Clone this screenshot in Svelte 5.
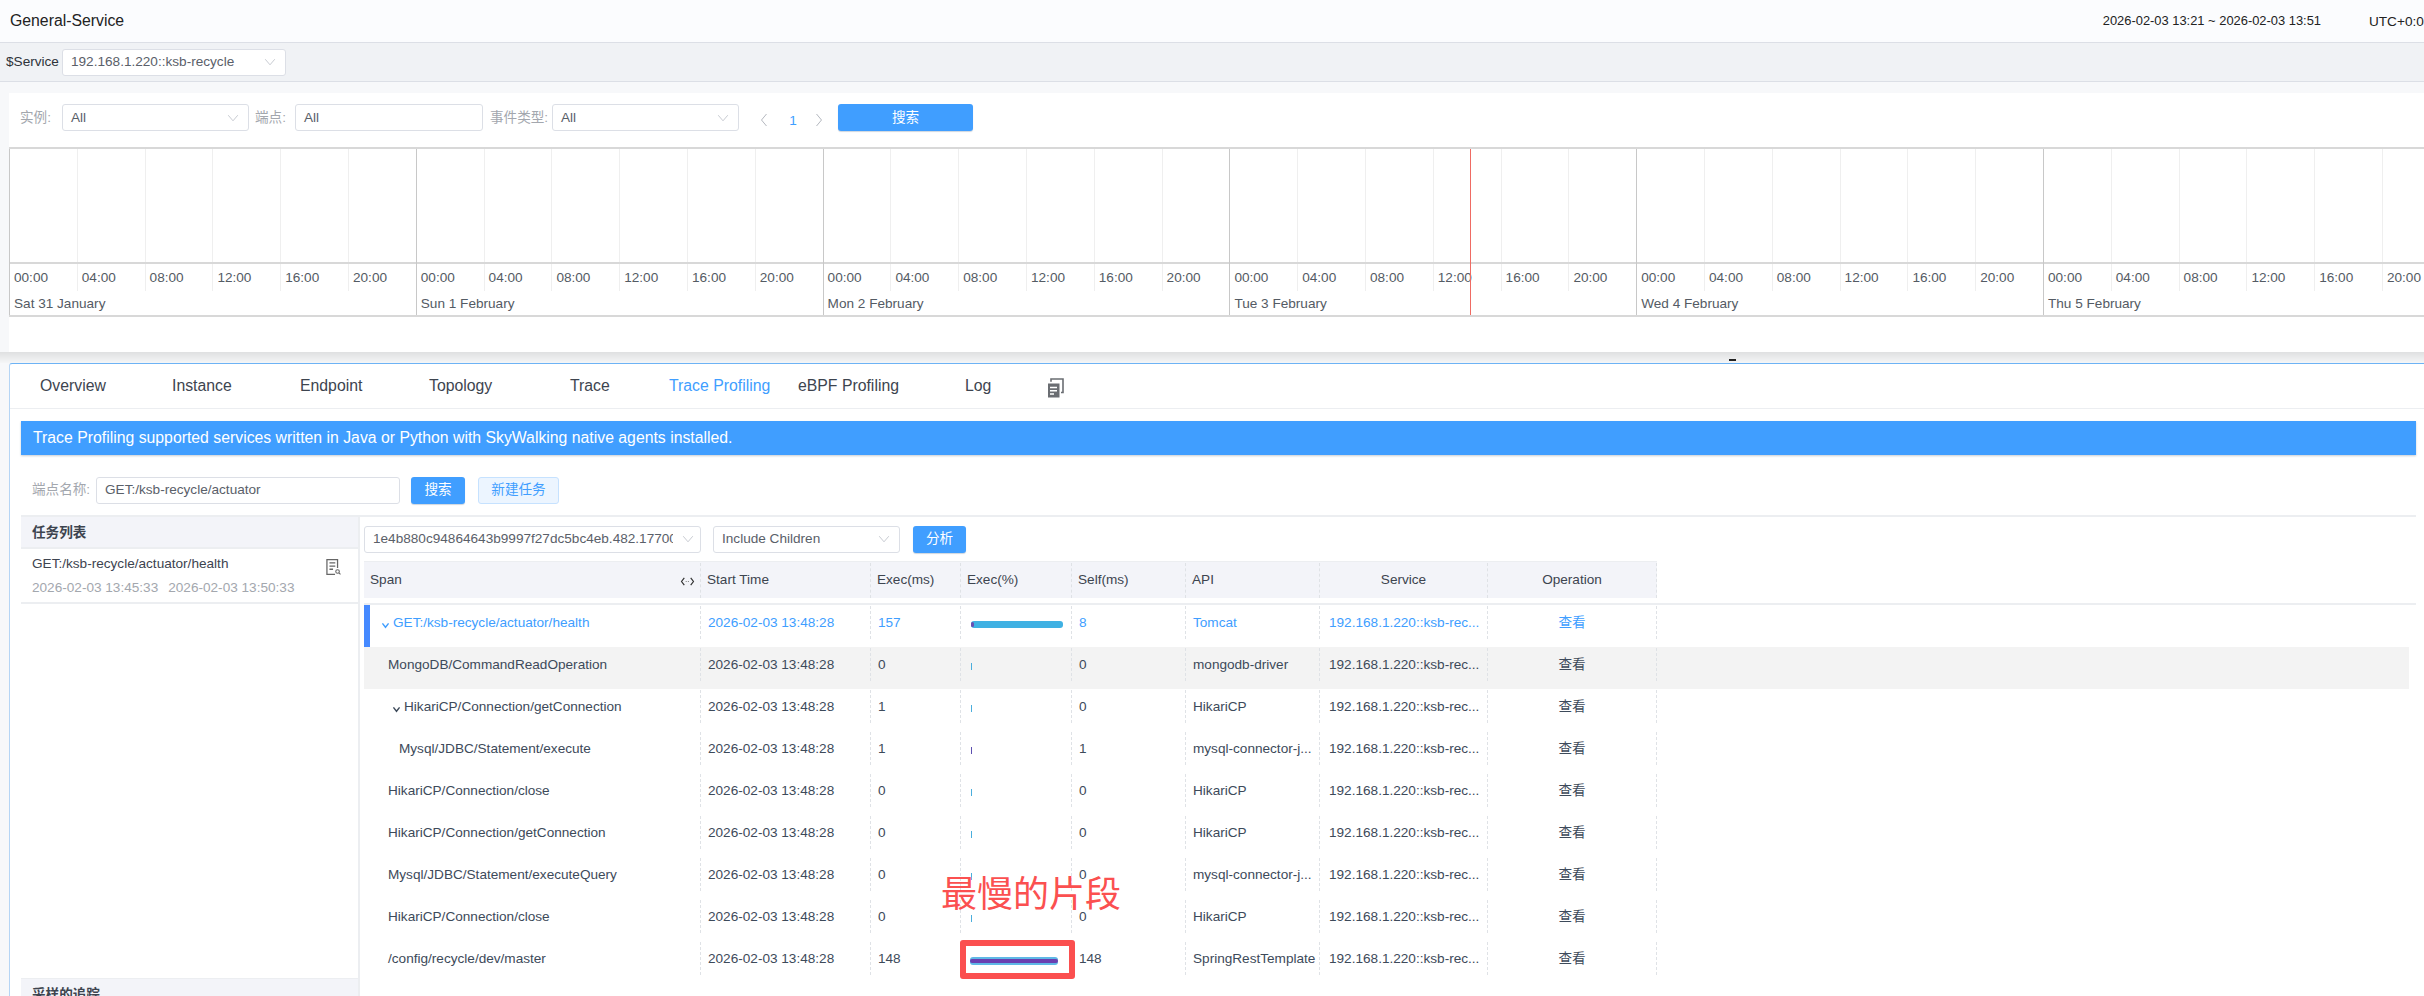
<script>
  const days = ['Sat 31 January', 'Sun 1 February', 'Mon 2 February', 'Tue 3 February', 'Wed 4 February', 'Thu 5 February'];
  const hours = ['00:00', '04:00', '08:00', '12:00', '16:00', '20:00'];
  const tabs = [
    { t: 'Overview', w: 132 }, { t: 'Instance', w: 128 }, { t: 'Endpoint', w: 129 }, { t: 'Topology', w: 141 },
    { t: 'Trace', w: 99 }, { t: 'Trace Profiling', w: 129, on: true }, { t: 'eBPF Profiling', w: 167 }, { t: 'Log', w: 81 }
  ];
  const rows = [
    { s: 'GET:/ksb-recycle/actuator/health', ind: 11, caret: true, ms: '157', self: '8', api: 'Tomcat', pct: 92, sel: true },
    { s: 'MongoDB/CommandReadOperation', ind: 18, ms: '0', self: '0', api: 'mongodb-driver', hover: true },
    { s: 'HikariCP/Connection/getConnection', ind: 22, caret: true, ms: '1', self: '0', api: 'HikariCP' },
    { s: 'Mysql/JDBC/Statement/execute', ind: 29, ms: '1', self: '1', api: 'mysql-connector-j...', tick: '#5c4fb0' },
    { s: 'HikariCP/Connection/close', ind: 18, ms: '0', self: '0', api: 'HikariCP' },
    { s: 'HikariCP/Connection/getConnection', ind: 18, ms: '0', self: '0', api: 'HikariCP' },
    { s: 'Mysql/JDBC/Statement/executeQuery', ind: 18, ms: '0', self: '0', api: 'mysql-connector-j...' },
    { s: 'HikariCP/Connection/close', ind: 18, ms: '0', self: '0', api: 'HikariCP' },
    { s: '/config/recycle/dev/master', ind: 18, ms: '148', self: '148', api: 'SpringRestTemplate', pct: 88, slow: true }
  ];
</script>

<div class="page">
  <header class="top">
    <span class="title">General-Service</span>
    <span class="range">2026-02-03 13:21 ~ 2026-02-03 13:51</span>
    <span class="utc">UTC+0:0</span>
  </header>
  <div class="svcbar">
    <span class="svclabel">$Service</span>
    <div class="sel svcsel"><span>192.168.1.220::ksb-recycle</span><svg class="caret" viewBox="0 0 14 10"><path d="M1 1.5 7 8.5 13 1.5" /></svg></div>
  </div>

  <div class="gap1"></div>

  <section class="events">
    <div class="filters">
      <span class="lab l1">实例:</span>
      <div class="sel f1"><span>All</span><svg class="caret" viewBox="0 0 14 10"><path d="M1 1.5 7 8.5 13 1.5" /></svg></div>
      <span class="lab l2">端点:</span>
      <div class="sel f2"><span>All</span></div>
      <span class="lab l3">事件类型:</span>
      <div class="sel f3"><span>All</span><svg class="caret" viewBox="0 0 14 10"><path d="M1 1.5 7 8.5 13 1.5" /></svg></div>
      <div class="pager">
        <svg viewBox="0 0 8 14"><path d="M6.5 1 1.5 7 6.5 13" /></svg>
        <span>1</span>
        <svg viewBox="0 0 8 14"><path d="M1.5 1 6.5 7 1.5 13" /></svg>
      </div>
      <button class="primary big">搜索</button>
    </div>
    <div class="timeline">
      {#each days as d}
        <div class="day">
          <div class="plot">{#each hours as h}<i></i>{/each}</div>
          <div class="hrs">{#each hours as h}<span>{h}</span>{/each}</div>
          <div class="dname">{d}</div>
        </div>
      {/each}
      <div class="now"></div>
    </div>
  </section>

  <div class="gap2"><span class="handle"></span></div>

  <section class="panel">
    <nav class="tabs">
      {#each tabs as tb}
        <span class="tab" class:on={tb.on} style="width:{tb.w}px">{tb.t}</span>
      {/each}
      <svg class="copy" viewBox="0 0 20 20">
        <path fill="#6a6d72" d="M2 5.5h11.5v14H2z" />
        <path fill="none" stroke="#6a6d72" stroke-width="1.6" d="M5 3.8V1h12v13.5h-2" />
        <path stroke="#fff" stroke-width="1.6" d="M4 9.5h7M4 12.8h7M4 16h4" />
      </svg>
    </nav>
    <div class="banner">Trace Profiling supported services written in Java or Python with SkyWalking native agents installed.</div>
    <div class="card">
      <div class="searchrow">
        <span class="lab l4">端点名称:</span>
        <div class="sel f4"><span>GET:/ksb-recycle/actuator</span></div>
        <button class="primary b2">搜索</button>
        <button class="ghost">新建任务</button>
      </div>
      <div class="cols">
        <aside class="tasks">
          <div class="thead">任务列表</div>
          <div class="task">
            <div class="tname">GET:/ksb-recycle/actuator/health
              <svg class="logs" viewBox="0 0 18 20"><path fill="none" stroke="#666" stroke-width="1.4" d="M13.5 11V1.7H1.7v16.6h9" /><path stroke="#666" stroke-width="1.4" d="M4.5 5.5h6.5M4.5 9h6.5M4.5 12.5h4" /><circle cx="13.5" cy="15" r="2" fill="none" stroke="#666" stroke-width="1.2" /><path stroke="#666" stroke-width="1.2" d="m15 16.5 1.8 1.8" /></svg>
            </div>
            <div class="ttime"><span>2026-02-03 13:45:33</span><span>2026-02-03 13:50:33</span></div>
          </div>
          <div class="spacer"></div>
          <div class="thead last">采样的追踪</div>
        </aside>
        <div class="main">
          <div class="analyze">
            <div class="sel s1"><span class="clip">1e4b880c94864643b9997f27dc5bc4eb.482.17700</span><svg class="caret" viewBox="0 0 14 10"><path d="M1 1.5 7 8.5 13 1.5" /></svg></div>
            <div class="sel s2"><span>Include Children</span><svg class="caret" viewBox="0 0 14 10"><path d="M1 1.5 7 8.5 13 1.5" /></svg></div>
            <button class="primary b3">分析</button>
          </div>
          <div class="hrow">
            <div class="c span spanh">Span<svg class="arrows" viewBox="0 0 16 12"><path d="M4.5 2 1.5 6l3 4M11.5 2l3 4-3 4" /><path class="dots" d="M6 6h4.5" /></svg></div>
            <div class="c start">Start Time</div>
            <div class="c ems">Exec(ms)</div>
            <div class="c epc">Exec(%)</div>
            <div class="c self">Self(ms)</div>
            <div class="c api">API</div>
            <div class="c svc ctr">Service</div>
            <div class="c op ctr">Operation</div>
          </div>
          <div class="hline"></div>
          {#each rows as r}
            <div class="row" class:sel-row={r.sel} class:hover={r.hover}>
              <div class="c span"><span class="spanname" style="padding-left:{r.ind}px">{#if r.caret}<svg class="tw" viewBox="0 0 10 8"><path d="M1.5 1.5 5 6l3.5-4.5" /></svg>{/if}{r.s}</span></div>
              <div class="c start in">2026-02-03 13:48:28</div>
              <div class="c ems in">{r.ms}</div>
              <div class="c epc">
                {#if r.pct}
                  <div class="bar" class:slow={r.slow} style="width:{r.pct}px"><i></i></div>
                {:else}
                  <div class="tick" style:background={r.tick}></div>
                {/if}
              </div>
              <div class="c self in">{r.self}</div>
              <div class="c api in">{r.api}</div>
              <div class="c svc in svcv">192.168.1.220::ksb-rec...</div>
              <div class="c op ctr">查看</div>
            </div>
          {/each}
        </div>
      </div>
    </div>
  </section>

  <div class="note">最慢的片段</div>
  <div class="box"></div>
</div>

<style>
  :global(html), :global(body) { margin: 0; height: 100%; overflow: hidden; background: #fff; }
  .page { position: relative; width: 2424px; height: 996px; overflow: hidden; background: #f7f8fa; color: #3d444f; font: 13.6px/1.3 "Liberation Sans", "Noto Sans CJK SC", sans-serif; }
  svg { display: block; flex: none; }
  .top { display: flex; align-items: center; height: 42px; box-sizing: border-box; padding-left: 10px; background: #fbfcfe; color: #222; }
  .title { font-size: 15.8px; flex: 1; }
  .range { font-size: 12.9px; color: #222; }
  .utc { font-size: 13.6px; margin-left: 48px; width: 55px; flex: none; color: #222; white-space: nowrap; overflow: hidden; position: relative; top: 1px; }
  .svcbar { display: flex; align-items: center; height: 40px; box-sizing: border-box; padding-left: 6px; background: #f0f2f5; border-top: 1px solid #dcdfe6; border-bottom: 1px solid #dcdfe6; color: #2e333a; }
  .svclabel { width: 56px; flex: none; }
  .sel { display: flex; align-items: center; justify-content: space-between; box-sizing: border-box; height: 27px; padding: 0 9px 0 8px; background: #fff; border: 1px solid #dcdfe6; border-radius: 3px; color: #5a6069; white-space: nowrap; }
  .svcsel { width: 224px; }
  .caret { width: 12px; height: 8px; }
  .caret path { fill: none; stroke: #c0c4cc; stroke-width: 1.1; }
  .gap1 { height: 11px; }
  .events { margin-left: 9px; height: 259px; background: #fff; overflow: hidden; }
  .filters { display: flex; align-items: center; height: 55px; box-sizing: border-box; padding-bottom: 6px; }
  .lab { color: #a3a7ae; flex: none; white-space: nowrap; }
  .l1 { margin-left: 11px; width: 42px; }
  .f1 { width: 187px; }
  .l2 { margin-left: 6px; width: 40px; }
  .f2 { width: 188px; }
  .l3 { margin-left: 7px; width: 62px; }
  .f3 { width: 187px; }
  .pager { display: flex; align-items: center; margin-left: 21px; width: 78px; box-sizing: border-box; color: #409eff; }
  .pager span { width: 28px; text-align: center; margin: 0 8px 0 11px; position: relative; top: 3px; }
  .pager svg { width: 8px; height: 14px; margin-top: 4px; }
  .pager path { fill: none; stroke: #b4b8bf; stroke-width: 1; }
  button { font: inherit; border: 0; padding: 0; cursor: pointer; }
  .primary { background: #409eff; color: #fff; border-radius: 3px; box-shadow: 0 1px 1px #cfd6de; }
  .big { width: 135px; height: 27px; }
  .timeline { position: relative; display: flex; height: 170px; width: 2441px; box-sizing: border-box; border-top: 2px solid #d8d8d8; border-bottom: 2px solid #d8d8d8; margin-top: -1px; }
  .day { flex: 0 0 406.8px; border-left: 1px solid #c8c8c8; box-sizing: border-box; }
  .plot { display: flex; height: 113px; border-bottom: 2px solid #d8d8d8; box-sizing: content-box; }
  .plot i { flex: 1; border-left: 1px solid #efefef; }
  .plot i:first-child { border-left: 0; }
  .hrs { display: flex; height: 27px; box-sizing: border-box; color: #545b64; }
  .hrs span { flex: 1; padding: 5px 0 0 4px; box-sizing: border-box; border-left: 1px solid #efefef; line-height: 17px; }
  .hrs span:first-child { border-left: 0; }
  .dname { color: #545b64; padding: 0 0 0 4px; line-height: 26px; }
  .now { position: absolute; left: 1461px; top: 0; bottom: 0; width: 1px; background: #ef6b63; }
  .gap2 { height: 11px; position: relative; background: linear-gradient(#dfe0e1, #f5f6f7); }
  .handle { position: absolute; left: 1729px; top: 7px; width: 7px; height: 2px; background: #222; }
  .panel { margin-left: 9px; height: 633px; box-sizing: border-box; background: #fff; border-top: 1px solid #6db3f5; border-left: 1px solid #b5d5f5; border-top-left-radius: 3px; overflow: hidden; }
  .tabs { display: flex; align-items: center; height: 45px; box-sizing: border-box; border-bottom: 1px solid #eceef1; padding-left: 30px; font-size: 15.8px; color: #3d444f; }
  .tab { flex: none; white-space: nowrap; }
  .tab.on { color: #409eff; }
  .copy { width: 20px; height: 20px; margin-top: 3px; }
  .banner { margin: 12px 0 0 11px; height: 34px; line-height: 33px; padding-left: 12px; width: 2395px; box-sizing: border-box; background: #409eff; color: #fff; font-size: 15.8px; box-shadow: 0 1px 2px #c8ccd2; }
  .card { margin: 11px 0 0 11px; width: 2395px; background: #fff; }
  .searchrow { display: flex; align-items: center; height: 51px; border-bottom: 2px solid #eceef1; box-sizing: border-box; padding: 0 0 1px 11px; }
  .l4 { width: 64px; }
  .f4 { width: 304px; }
  .b2 { margin-left: 11px; width: 54px; height: 27px; }
  .ghost { margin-left: 13px; width: 81px; height: 27px; background: #ecf5ff; color: #409eff; border: 1px solid #c6e2ff; border-radius: 3px; box-sizing: border-box; }
  .cols { display: flex; height: 493px; }
  .tasks { width: 339px; flex: none; display: flex; flex-direction: column; border-right: 2px solid #eceef1; box-sizing: border-box; }
  .thead { background: #f3f4f9; height: 32px; line-height: 31px; padding-left: 11px; font-weight: bold; color: #3d444f; flex: none; box-sizing: border-box; border-bottom: 2px solid #eceef1; }
  .thead.last { border-bottom: 0; border-top: 1px solid #eceef1; }
  .task { height: 55px; flex: none; padding: 6px 0 0 11px; box-sizing: border-box; border-bottom: 2px solid #eceef1; }
  .tname { display: flex; justify-content: space-between; padding-right: 16px; height: 24px; line-height: 18px; }
  .logs { width: 17px; height: 18px; margin-top: 3px; }
  .ttime { display: flex; gap: 10px; color: #a3a7ae; line-height: 18px; }
  .spacer { flex: 1; }
  .main { flex: 1; padding: 0 7px 0 4px; min-width: 0; }
  .analyze { display: flex; align-items: center; height: 44px; }
  .s1 { width: 337px; padding-right: 6px; }
  .clip { width: 300px; overflow: hidden; }
  .s2 { margin-left: 12px; width: 187px; }
  .b3 { margin-left: 13px; width: 53px; height: 27px; }
  .hrow { display: flex; height: 37px; width: 1293px; background: #f3f4f9; align-items: center; box-sizing: border-box; border-top: 1px solid #eceef1; }
  .hline { height: 7px; border-bottom: 2px solid #eceef1; box-sizing: border-box; margin-right: -7px; }
  .c { flex: none; box-sizing: border-box; height: 100%; display: flex; align-items: center; border-left: 1px dashed #dfe2e6; white-space: nowrap; padding-left: 6px; }
  .hrow .c { height: 35px; }
  .span { width: 336px; border-left: 0; padding-left: 6px; }
  .spanh { justify-content: space-between; padding-right: 5px; }
  .start { width: 170px; }
  .ems { width: 90px; }
  .epc { width: 111px; }
  .row .epc { padding-left: 10px; }
  .self { width: 114px; }
  .api { width: 134px; }
  .svc { width: 168px; }
  .op { width: 170px; border-right: 1px dashed #dfe2e6; }
  .ctr { justify-content: center; padding-left: 0; }
  .in { padding-left: 7px; }
  .svcv { padding-left: 9px; }
  .arrows { width: 15px; height: 11px; margin-top: 2px; }
  .arrows path { fill: none; stroke: #333; stroke-width: 1.3; }
  .arrows .dots { stroke-dasharray: 1.2 1.2; stroke: #888; }
  .row { display: flex; height: 42px; padding: 1px 0 8px; box-sizing: border-box; color: #3d4a5a; }
  .row .c { height: 33px; }
  .hover { background: #f3f3f3; }
  .sel-row { color: #409eff; box-shadow: inset 6px 0 0 #4589ff; }
  .spanname { display: flex; align-items: center; }
  .tw { width: 9px; height: 7px; margin: 6px 3px 0 0; }
  .tw path { fill: none; stroke: #3d4a5a; stroke-width: 1.6; }
  .sel-row .tw path { stroke: #409eff; }
  .tick { width: 1px; height: 7px; margin-top: 4px; background: #4aaedd; }
  .bar { position: relative; height: 7px; margin-top: 4px; border-radius: 3px; background: #3fb1e3; }
  .bar i { position: absolute; left: 0; top: 1px; bottom: 1px; width: 3px; background: #6a4fb3; border-radius: 2px; }
  .bar.slow { height: 8px; margin: 5px 0 0 -1px; background: #5fb8e6; }
  .bar.slow i { width: 100%; top: 1.5px; bottom: 2px; background: #6a3fb0; }
  .note { position: absolute; left: 941px; top: 872px; color: #fb5050; font-size: 36px; line-height: 46px; white-space: nowrap; }
  .box { position: absolute; left: 960px; top: 940px; width: 115px; height: 39px; box-sizing: border-box; border: 6px solid #fb4f4f; border-radius: 3px; }
</style>
